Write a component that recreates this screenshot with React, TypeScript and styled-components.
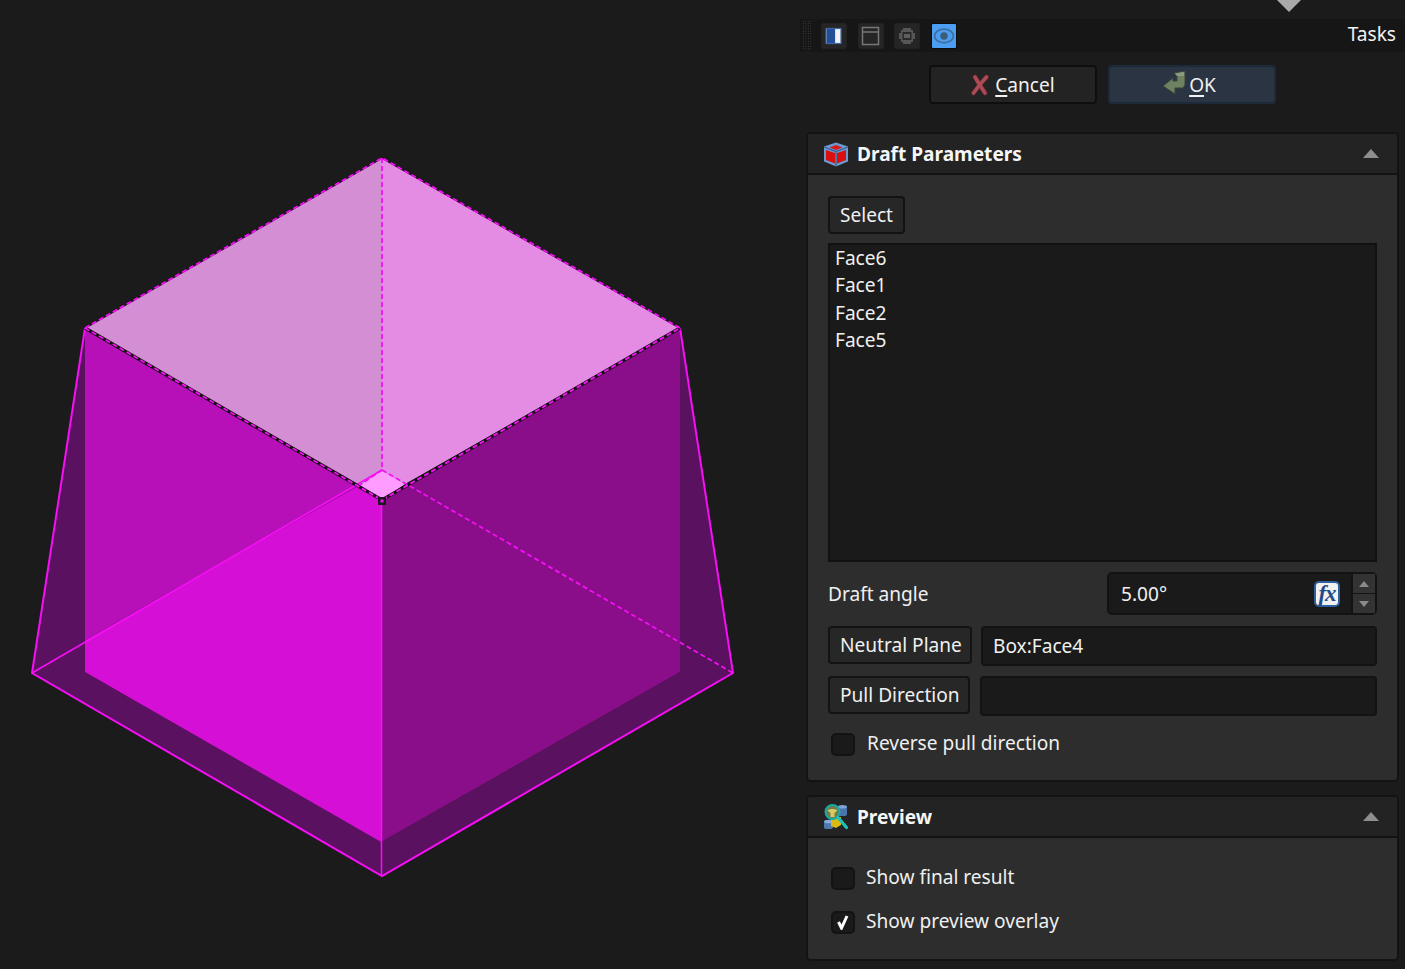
import React from "react";
import styled, { createGlobalStyle } from "styled-components";

const FONT = "19.1px";

const Global = createGlobalStyle`
  html, body { margin: 0; padding: 0; background: #1b1b1b; }
  body { font-family: "Noto Sans", "Open Sans", sans-serif; color: #f0f0f0; overflow: hidden; }
  * { box-sizing: border-box; }
`;

const Page = styled.div`
  display: grid;
  grid-template-columns: 800px 605px;
  width: 1405px;
  height: 969px;
  background: #1b1b1b;
  overflow: hidden;
`;
const Viewport = styled.div`
  height: 969px;
  & > svg { display: block; }
`;
const Side = styled.div`
  display: flex;
  flex-direction: column;
`;
const TopStrip = styled.div`
  height: 19px;
  padding-right: 104px;
  display: flex;
  justify-content: flex-end;
`;
const Marker = styled.div`
  width: 0;
  height: 0;
  border-left: 12px solid transparent;
  border-right: 12px solid transparent;
  border-top: 12px solid #a9a9a9;
`;
const ToolBar = styled.div`
  height: 33px;
  background: #161616;
  display: flex;
  align-items: center;
  padding: 0 9px 0 2px;
`;
const Gripper = styled.div`
  width: 9px;
  height: 31px;
  margin-right: 10px;
  background-image: radial-gradient(#4a4a4a 0.7px, transparent 0.8px);
  background-size: 2.5px 2.5px;
`;
const ToolIcons = styled.div`
  display: flex;
  gap: 10.67px;
  flex: 1;
`;
const ToolIcon = styled.div<{ $active?: boolean }>`
  width: 26px;
  height: 26px;
  display: flex;
  align-items: center;
  justify-content: center;
  background: ${(p) => (p.$active ? "#4b9ff2" : "#252525")};
  border: 1px solid ${(p) => (p.$active ? "#0c0c0c" : "#222")};
  border-radius: 2px;
`;
const TasksLabel = styled.div`
  font-size: ${FONT};
  line-height: 28px;
  margin-top: -3px;
  color: #f2f2f2;
`;
const ButtonRow = styled.div`
  display: flex;
  justify-content: center;
  gap: 11px;
  margin: 13px 1px 28px 0;
`;
const DialogButton = styled.div<{ $primary?: boolean }>`
  width: 168px;
  height: 39px;
  display: flex;
  align-items: center;
  justify-content: center;
  gap: ${(p) => (p.$primary ? 2 : 5)}px;
  padding-right: ${(p) => (p.$primary ? 5 : 0)}px;
  font-size: ${FONT};
  border-radius: 4px;
  background: ${(p) => (p.$primary ? "#2a3442" : "#232323")};
  border: 2px solid ${(p) => (p.$primary ? "#1d2a3a" : "#0e0e0e")};
  color: #f2f2f2;
  & u { text-decoration-thickness: 2px; text-underline-offset: 3px; }
`;
const Group = styled.section<{ $height: number }>`
  width: 593px;
  height: ${(p) => p.$height}px;
  margin: 0 0 13px 6px;
  background: #2d2d2d;
  border: 2px solid #131313;
  border-radius: 5px;
  display: flex;
  flex-direction: column;
`;
const GroupHead = styled.header`
  height: 41px;
  flex: none;
  background: #232323;
  border-bottom: 2px solid #131313;
  border-radius: 4px 4px 0 0;
  display: flex;
  align-items: center;
  padding: 0 18px 0 15px;
  gap: 8px;
`;
const GroupTitle = styled.div`
  flex: 1;
  font-size: ${FONT};
  font-weight: 700;
  color: #f6f6f6;
`;
const Collapse = styled.div`
  width: 0;
  height: 0;
  border-left: 8px solid transparent;
  border-right: 8px solid transparent;
  border-bottom: 9px solid #8e8e8e;
`;
const GroupBody = styled.div`
  padding: 21px 20px 0 20px;
  display: flex;
  flex-direction: column;
`;
const Button = styled.div<{ $width?: number }>`
  flex: none;
  height: 38px;
  padding: 0 0 0 10px;
  width: ${(p) => (p.$width ? `${p.$width}px` : "77px")};
  display: inline-flex;
  align-items: center;
  font-size: ${FONT};
  white-space: nowrap;
  background: #272727;
  border: 2px solid #131313;
  border-radius: 4px;
  color: #f0f0f0;
`;
const SelectRow = styled.div`
  display: flex;
  margin-bottom: 9px;
`;
const FaceList = styled.div`
  height: 319px;
  background: #1a1a1a;
  border: 2px solid #111;
  padding: 0 5px;
  font-size: ${FONT};
  line-height: 27.3px;
  color: #f0f0f0;
`;
const AngleRow = styled.div`
  display: flex;
  align-items: center;
  justify-content: space-between;
  margin-top: 10px;
  height: 43px;
  font-size: ${FONT};
`;
const Spin = styled.div`
  width: 270px;
  height: 43px;
  display: flex;
  align-items: center;
  background: #1a1a1a;
  border: 2px solid #131313;
  border-radius: 5px;
`;
const SpinValue = styled.div`
  flex: 1;
  padding-left: 12px;
  font-size: ${FONT};
`;
const FxBadge = styled.div`
  width: 26px;
  height: 26px;
  margin-right: 11px;
  flex: none;
  background: #f1f1f1;
  border: 2px solid #2e5f9f;
  border-radius: 5px;
  color: #234a8a;
  display: flex;
  align-items: center;
  justify-content: center;
  font-family: "Liberation Serif", serif;
  font-style: italic;
  font-weight: 700;
  font-size: 23px;
  line-height: 1;
  letter-spacing: -1px;
`;
const SpinButtons = styled.div`
  width: 24px;
  align-self: stretch;
  flex: none;
  display: flex;
  flex-direction: column;
  background: #2d2d2d;
  border-left: 2px solid #131313;
`;
const SpinBtn = styled.div<{ $down?: boolean }>`
  flex: 1;
  display: flex;
  align-items: center;
  justify-content: center;
  background: #333;
  border-top: ${(p) => (p.$down ? "1px solid #131313" : "none")};
  &::after {
    content: "";
    border-left: 5px solid transparent;
    border-right: 5px solid transparent;
    ${(p) => (p.$down ? "border-top: 6px solid #8b8b8b;" : "border-bottom: 6px solid #8b8b8b;")}
  }
`;
const FieldRow = styled.div<{ $top: number; $gap: number }>`
  display: flex;
  gap: ${(p) => p.$gap}px;
  margin-top: ${(p) => p.$top}px;
`;
const Field = styled.div`
  flex: 1;
  height: 40px;
  padding: 0 10px;
  display: flex;
  align-items: center;
  font-size: ${FONT};
  background: #1a1a1a;
  border: 2px solid #131313;
  border-radius: 4px;
`;
const CheckRow = styled.div<{ $top: number; $gap: number }>`
  display: flex;
  align-items: center;
  gap: ${(p) => p.$gap}px;
  margin: ${(p) => p.$top}px 0 0 3px;
  height: 24px;
  font-size: ${FONT};
  line-height: 24px;
  color: #f0f0f0;
`;
const CheckLabel = styled.span`
  position: relative;
  top: -1px;
`;
const CheckBox = styled.div`
  width: 24px;
  height: 23px;
  background: #1a1a1a;
  border: 2px solid #131313;
  border-radius: 5px;
  display: flex;
  align-items: center;
  justify-content: center;
`;
const ReturnSvg = styled.svg`
  margin-top: -5px;
`;

const Scene = () => (
  <svg width="800" height="969" viewBox="0 0 800 969">
    <polygon points="32,673 85,328 85,672 381,842 382,876" fill="#5a1260" />
    <polygon points="680,328 733,673 382,876 381,842 680,672" fill="#5a1260" />
    <polygon points="85,328 360,485 85,640" fill="#b810b8" />
    <polygon points="85,640 360,485 382,500 381,842 85,672" fill="#d60fd6" />
    <polygon points="382,500 680,328 680,672 381,842" fill="#8a0e8a" />
    <polygon points="382,158 382,470 360,485 85,328" fill="#d48fd4" />
    <polygon points="382,158 680,328 405,484 382,470" fill="#e48ce4" />
    <polygon points="382,470 405,484 382,500 360,485" fill="#ff9cff" />

    <g fill="none" stroke="#f50ff5" strokeWidth="2">
      <polyline points="85,328 32,673 382,876 733,673 680,328" />
      <line x1="32" y1="673" x2="382" y2="470" strokeWidth="1.6" />
    </g>
    <line x1="381.500" y1="500" x2="381.500" y2="876" stroke="#f50ff5" strokeWidth="1.600" />
    <polyline points="85,328 382,158 680,328" fill="none" stroke="#2a0c2a" strokeWidth="1.800" />
    <polyline points="85,328 382,500 680,328" fill="none" stroke="#111" strokeWidth="3.200" />
    <g fill="none" stroke="#f50ff5" strokeWidth="1.800" strokeDasharray="5 3">
      <polyline points="85,328 382,158 680,328" />
      <polyline points="85,328 382,500 680,328" />
      <line x1="382" y1="158" x2="382" y2="470" />
      <line x1="382" y1="470" x2="733" y2="673" />
      <line x1="382" y1="470" x2="360" y2="485" />
    </g>
    <rect x="378" y="497" width="8" height="8" fill="#1a1a1a" />
    <rect x="380.500" y="499.500" width="3" height="3" fill="#f50ff5" />
  </svg>
);

const PanelIcon = () => (
  <svg width="18" height="18" viewBox="0 0 18 18">
    <rect x="1" y="1.500" width="15" height="15" fill="#f2f2f2" stroke="#3d68a8" strokeWidth="1.200" />
    <rect x="1.600" y="2" width="8.500" height="14" fill="#224f96" />
  </svg>
);
const WindowIcon = () => (
  <svg width="20" height="20" viewBox="0 0 20 20" fill="none" stroke="#777" strokeWidth="1.500">
    <rect x="1.500" y="1.500" width="16" height="17" />
    <line x1="1.500" y1="6" x2="17.500" y2="6" />
  </svg>
);
const ChipIcon = () => (
  <svg width="20" height="20" viewBox="0 0 20 20">
    <path d="M6 2h8v2h2v3h2v6h-2v3h-2v2H6v-2H4v-3H2V7h2V4h2z" fill="#565656" />
    <rect x="5.500" y="6" width="9" height="8" fill="#2a2a2a" />
    <rect x="7" y="8" width="6" height="4" fill="#5e5e5e" />
  </svg>
);
const EyeIcon = () => (
  <svg width="22" height="20" viewBox="0 0 22 20">
    <ellipse cx="11" cy="10" rx="9.500" ry="6.800" fill="none" stroke="#3f6f9e" strokeWidth="1.800" />
    <circle cx="11" cy="10" r="3.800" fill="#3c5c7c" />
  </svg>
);
const CrossIcon = () => (
  <svg width="20" height="22" viewBox="0 0 20 22" fill="none" strokeLinecap="round">
    <g stroke="#4e2229" strokeWidth="5">
      <path d="M5 3 Q9 10 15 19" />
      <path d="M16.500 3 Q10 10 3.500 19" />
    </g>
    <g stroke="#ac4a56" strokeWidth="3.600">
      <path d="M5 3 Q9 10 15 19" />
      <path d="M16.500 3 Q10 10 3.500 19" />
    </g>
  </svg>
);
const ReturnIcon = () => (
  <ReturnSvg width="25" height="25" viewBox="0 0 25 25">
    <path d="M12 3 L23 1 V15 L21 18 H13 V24 L1 16 L11 8 V11 H15 V6 Z" fill="#6e8160" stroke="#39443a" strokeWidth="1" strokeLinejoin="round" />
    <path d="M13 3.500 L22 2 V6 L15 6 Z" fill="#8a9c7b" />
  </ReturnSvg>
);
const CubeIcon = () => (
  <svg width="26" height="26" viewBox="0 0 26 26">
    <path d="M13 1.500l12 4v15l-12 5-12-5v-15z" fill="#6a9ad0" />
    <path d="M3 9l9 3v10.500l-9-3.500zM23 9l-9 3v10.500l9-3.500z" fill="#dc0f0f" />
    <path d="M6.500 6.500L13 4l6.500 2.500L13 9z" fill="#d81a1a" />
    <path d="M1 6l12 4.500L25 6M13 10.500V25" fill="none" stroke="#3b5f90" strokeWidth="1.300" />
  </svg>
);
const PreviewIcon = () => (
  <svg width="26" height="26" viewBox="0 0 26 26">
    <rect x="15" y="2" width="9" height="10" rx="2" fill="#4a74ac" />
    <ellipse cx="19.500" cy="2.800" rx="4.500" ry="1.800" fill="#7da4d6" />
    <rect x="1" y="17" width="9" height="8" rx="2" fill="#4f78ae" />
    <ellipse cx="5.500" cy="17.500" rx="4.500" ry="1.800" fill="#86acdc" />
    <path d="M8 13h10v8l-5 3-5-2z" fill="#d9ba10" />
    <circle cx="9.500" cy="8" r="7" fill="#75784a" stroke="#16aca6" strokeWidth="2" />
    <path d="M4.500 6.500C7 4.500 12 4.500 14.500 6.500L11.500 9v4h-4V9z" fill="#d4cb62" />
    <line x1="15" y1="13.500" x2="23.500" y2="23.500" stroke="#20c0b8" strokeWidth="3.200" strokeLinecap="round" />
  </svg>
);
const CheckMark = () => (
  <svg width="16" height="16" viewBox="0 0 16 16">
    <path d="M3.500 8l3 6 5.500-12" fill="none" stroke="#fff" strokeWidth="3" />
  </svg>
);

export default function App() {
  return (
    <Page>
      <Global />
      <Viewport>
        <Scene />
      </Viewport>
      <Side>
        <TopStrip>
          <Marker />
        </TopStrip>
        <ToolBar>
          <Gripper />
          <ToolIcons>
            <ToolIcon><PanelIcon /></ToolIcon>
            <ToolIcon><WindowIcon /></ToolIcon>
            <ToolIcon><ChipIcon /></ToolIcon>
            <ToolIcon $active><EyeIcon /></ToolIcon>
          </ToolIcons>
          <TasksLabel>Tasks</TasksLabel>
        </ToolBar>
        <ButtonRow>
          <DialogButton><CrossIcon /><span><u>C</u>ancel</span></DialogButton>
          <DialogButton $primary><ReturnIcon /><span><u>O</u>K</span></DialogButton>
        </ButtonRow>
        <Group $height={650}>
          <GroupHead>
            <CubeIcon />
            <GroupTitle>Draft Parameters</GroupTitle>
            <Collapse />
          </GroupHead>
          <GroupBody>
            <SelectRow><Button>Select</Button></SelectRow>
            <FaceList>
              <div>Face6</div>
              <div>Face1</div>
              <div>Face2</div>
              <div>Face5</div>
            </FaceList>
            <AngleRow>
              <span>Draft angle</span>
              <Spin>
                <SpinValue>5.00°</SpinValue>
                <FxBadge>fx</FxBadge>
                <SpinButtons>
                  <SpinBtn />
                  <SpinBtn $down />
                </SpinButtons>
              </Spin>
            </AngleRow>
            <FieldRow $top={11} $gap={9}>
              <Button $width={144}>Neutral Plane</Button>
              <Field>Box:Face4</Field>
            </FieldRow>
            <FieldRow $top={10} $gap={10}>
              <Button $width={142}>Pull Direction</Button>
              <Field />
            </FieldRow>
            <CheckRow $top={16} $gap={12}>
              <CheckBox />
              <CheckLabel>Reverse pull direction</CheckLabel>
            </CheckRow>
          </GroupBody>
        </Group>
        <Group $height={166}>
          <GroupHead>
            <PreviewIcon />
            <GroupTitle>Preview</GroupTitle>
            <Collapse />
          </GroupHead>
          <GroupBody>
            <CheckRow $top={7} $gap={11}>
              <CheckBox />
              <CheckLabel>Show final result</CheckLabel>
            </CheckRow>
            <CheckRow $top={20} $gap={11}>
              <CheckBox><CheckMark /></CheckBox>
              <CheckLabel>Show preview overlay</CheckLabel>
            </CheckRow>
          </GroupBody>
        </Group>
      </Side>
    </Page>
  );
}
